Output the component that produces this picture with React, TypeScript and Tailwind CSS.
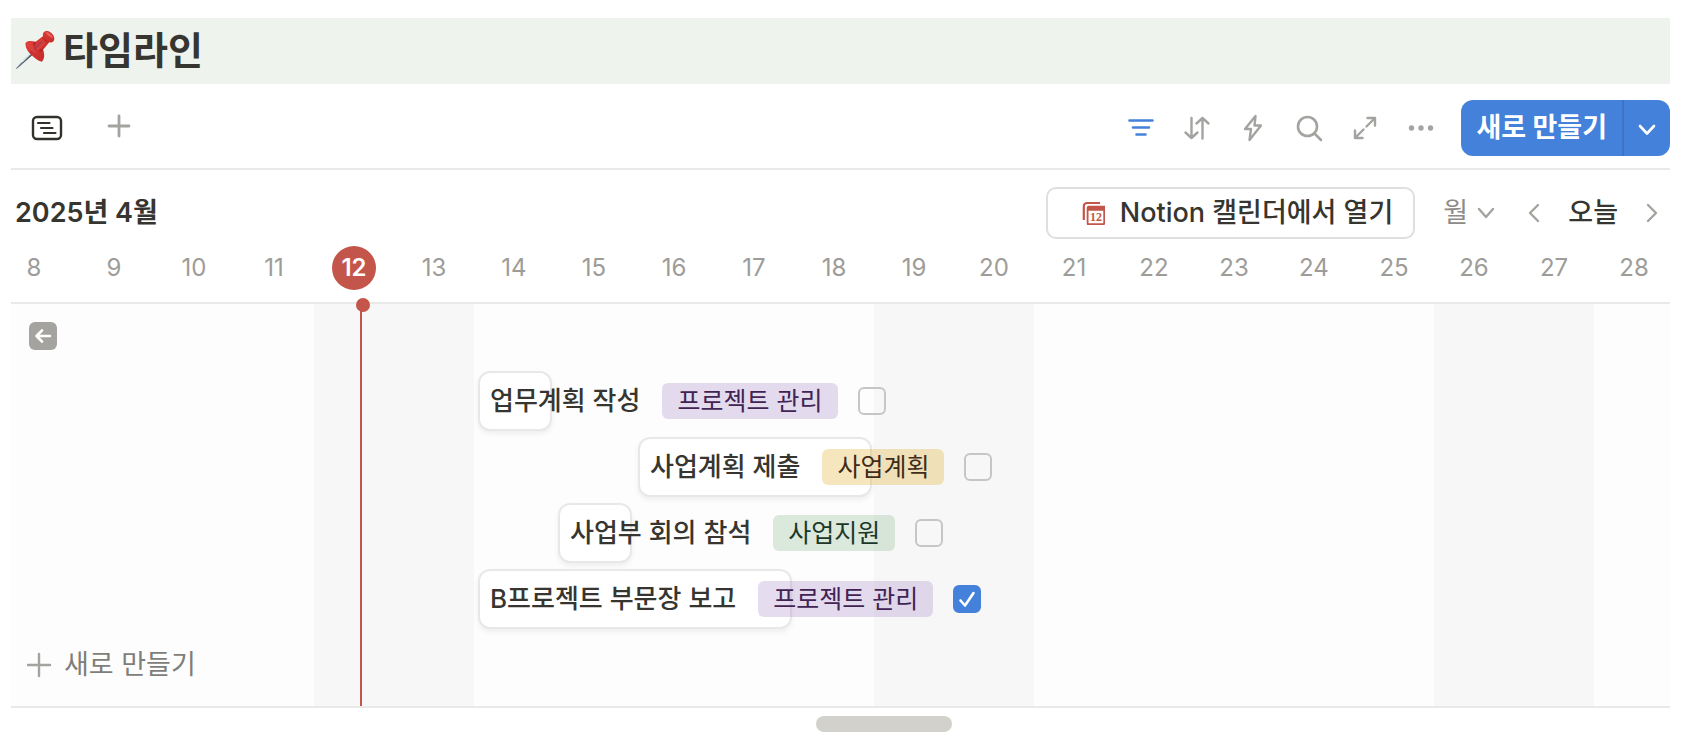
import React from "react";

const DAY_WIDTH = 80;
const FIRST_DAY = 8;
const TODAY = 12;
const DAYS = Array.from({ length: 21 }, (_, i) => FIRST_DAY + i);
const WEEKENDS = [12, 13, 19, 20, 26, 27];

type Task = {
  title: string;
  tag: string;
  tagClass: string;
  start: number;
  days: number;
  done: boolean;
};

const PURPLE = "bg-[rgba(163,125,196,0.27)] text-[#412454]";
const YELLOW = "bg-[rgba(226,174,46,0.31)] text-[#402c1b]";
const GREEN = "bg-[rgba(123,172,129,0.26)] text-[#1c3829]";

const TASKS: Task[] = [
  { title: "업무계획 작성", tag: "프로젝트 관리", tagClass: PURPLE, start: 14, days: 1, done: false },
  { title: "사업계획 제출", tag: "사업계획", tagClass: YELLOW, start: 16, days: 3, done: false },
  { title: "사업부 회의 참석", tag: "사업지원", tagClass: GREEN, start: 15, days: 1, done: false },
  { title: "B프로젝트 부문장 보고", tag: "프로젝트 관리", tagClass: PURPLE, start: 14, days: 4, done: true },
];

function PinIcon() {
  return (
    <svg width="40" height="40" viewBox="16 30 118 118" aria-hidden="true">
      <defs>
        <linearGradient id="pin-body" x1="0" y1="0" x2="1" y2="1">
          <stop offset="0" stopColor="#e8453f" />
          <stop offset="0.5" stopColor="#cf322f" />
          <stop offset="1" stopColor="#c02a2a" />
        </linearGradient>
      </defs>
      <path d="M72 84 L81 92 L22 143 L18 146 L20 141 Z" fill="#8ea3b8" />
      <path d="M76 88 L81 92 L24 142 L18 146 Z" fill="#55585f" />
      <path d="M68 86 L74 90 L38 125 L34 125 Z" fill="#dbe9f5" />
      <path
        d="M47 68 C52 61 66 61 77 65 L99 48 C96 38 103 31 113 33 C123 36 132 46 132 56 C132 65 124 69 117 66 L99 88 C104 103 103 116 95 124 C83 120 73 113 64 103 C54 94 46 81 47 68 Z"
        fill="url(#pin-body)"
      />
      <path d="M99 48 C103 58 109 63 117 66 C108 66 100 59 99 48 Z" fill="#a72228" />
      <path d="M77 65 C80 77 88 85 99 88 L93 96 C79 91 70 80 69 70 Z" fill="#b3262c" />
      <path d="M95 56 L106 70 L84 92 C78 88 73 82 73 76 Z" fill="#d93d3a" />
      <path d="M96 66 L64 99 L61 96 L92 63 Z" fill="#8b3c55" opacity="0.6" />
      <path d="M106 36 C114 35 126 45 128 55 C121 52 109 45 106 36 Z" fill="#ec5f58" />
      <path d="M50 70 C55 66 63 66 68 69 C66 78 74 92 84 100 C68 97 53 84 50 70 Z" fill="#dd403c" />
    </svg>
  );
}

function ToolButton({ label, children, blue }: { label: string; children: React.ReactNode; blue?: boolean }) {
  return (
    <button
      type="button"
      aria-label={label}
      className={`flex h-14 w-14 items-center justify-center ${blue ? "text-[#4381db]" : "text-[#a4a39f]"}`}
    >
      <svg width="30" height="30" viewBox="0 0 30 30" fill="none" stroke="currentColor" strokeWidth="2.6" strokeLinecap="round" strokeLinejoin="round">
        {children}
      </svg>
    </button>
  );
}

function Toolbar() {
  return (
    <div className="flex items-center justify-between border-b-2 border-[#e9e9e8] pt-4 pb-3">
      <div className="flex items-center gap-4">
        <button type="button" aria-label="타임라인 보기" className="flex h-14 w-[72px] items-center justify-center text-[#32312c]">
          <svg width="32" height="26" viewBox="0 0 32 26" fill="none" stroke="currentColor" strokeWidth="2.4" strokeLinecap="round">
            <rect x="2" y="2" width="28" height="22" rx="4" />
            <path d="M7 8h11.500M10 13h11.500M13 18h11.500" strokeWidth="2.200" />
          </svg>
        </button>
        <button type="button" aria-label="보기 추가" className="flex h-14 w-10 items-center justify-center pb-1 text-[#a4a39f]">
          <svg width="24" height="24" viewBox="0 0 24 24" fill="none" stroke="currentColor" strokeWidth="2.8" strokeLinecap="round">
            <path d="M12 2v20M2 12h20" />
          </svg>
        </button>
      </div>
      <div className="flex items-center">
        <ToolButton label="필터" blue>
          <path d="M3.500 7.500h23M7 14.500h16M10.500 21.500h9" />
        </ToolButton>
        <ToolButton label="정렬">
          <path d="M9.500 5v20M3.500 19.500l6 5.500 6-5.500M20.500 25.500V5M14.500 10.500l6-5.500 6 5.500" strokeWidth="2.400" />
        </ToolButton>
        <ToolButton label="자동화">
          <path d="M17.500 3L7 16h6L11.500 27L23 12.500h-6.500z" strokeWidth="2.400" />
        </ToolButton>
        <ToolButton label="검색">
          <circle cx="13.500" cy="13.500" r="9.500" />
          <path d="M20.500 20.500l6.500 6.500" />
        </ToolButton>
        <ToolButton label="확대">
          <path d="M17.500 5H25v7.500M25 5l-8.500 8.500M5 17.500V25h7.500M5 25l8.500-8.500" strokeWidth="2.400" />
        </ToolButton>
        <ToolButton label="더 보기">
          <g fill="currentColor" stroke="none">
            <circle cx="5.500" cy="15" r="2.700" />
            <circle cx="15" cy="15" r="2.700" />
            <circle cx="24.500" cy="15" r="2.700" />
          </g>
        </ToolButton>
        <div className="ml-3 flex h-14 overflow-hidden rounded-xl bg-[#4381db] text-white">
          <button type="button" className="flex items-center px-[15px] text-[27px] leading-8 font-bold">
            새로 만들기
          </button>
          <button type="button" aria-label="템플릿 선택" className="flex w-12 items-center justify-center border-l-2 border-[#3d75c4]">
            <svg width="20" height="20" viewBox="0 0 20 20" fill="none" stroke="currentColor" strokeWidth="2.600" strokeLinecap="round" strokeLinejoin="round">
              <path d="M3 8l7 7.500L17 8" />
            </svg>
          </button>
        </div>
      </div>
    </div>
  );
}

function CalendarIcon() {
  return (
    <svg width="24" height="24" viewBox="0 0 24 24" aria-hidden="true">
      <path d="M1.800 19V5.500C1.800 3 3 2 5.500 2H18" fill="none" stroke="#c4554a" strokeWidth="2.200" />
      <path
        fillRule="evenodd"
        d="M7.500 4.800H23V22.500C23 23.500 22.500 24 21.500 24H6C5 24 4.700 23.500 4.700 22.500V7C4.700 5.400 5.700 4.800 7.500 4.800ZM6.500 9.800V22.200H21.300V9.800Z"
        fill="#c4554a"
      />
      <text x="14" y="20.300" textAnchor="middle" fontSize="12" fontWeight="700" fill="#c4554a" fontFamily="'Liberation Serif', serif">
        12
      </text>
    </svg>
  );
}

function Chevron({ d, size }: { d: string; size: "narrow" | "wide" }) {
  const narrow = size === "narrow";
  return (
    <svg
      width={narrow ? 14 : 20}
      height={narrow ? 22 : 14}
      viewBox={narrow ? "0 0 14 22" : "0 0 20 14"}
      className="pointer-events-none shrink-0 text-[#a4a39f]"
      fill="none"
      stroke="currentColor"
      strokeWidth="2.400"
      strokeLinecap="round"
      strokeLinejoin="round"
      aria-hidden="true"
    >
      <path d={d} />
    </svg>
  );
}

function PeriodBar() {
  return (
    <div className="flex items-center justify-between pt-[17px] pl-1 text-[27px] leading-8 text-[#37352f]">
      <h2 className="font-semibold">2025년 4월</h2>
      <div className="flex items-center">
        <button type="button" className="flex h-[52px] items-center gap-[14px] rounded-[10px] border-2 border-[#dfdfde] pr-5 pl-[34px] font-medium">
          <CalendarIcon />
          Notion 캘린더에서 열기
        </button>
        <label className="ml-7 flex items-center">
          <select aria-label="기간 단위" className="-mr-5 appearance-none bg-transparent pr-7 text-[#8d8c88]" defaultValue="월">
            <option>월</option>
          </select>
          <Chevron size="wide" d="M3 3l7 8 7-8" />
        </label>
        <button type="button" aria-label="이전" className="ml-5 flex w-9 justify-center">
          <Chevron size="narrow" d="M11 3L3 11l8 8" />
        </button>
        <button type="button" className="px-4 font-medium">
          오늘
        </button>
        <button type="button" aria-label="다음" className="flex w-9 justify-center">
          <Chevron size="narrow" d="M3 3l8 8-8 8" />
        </button>
      </div>
    </div>
  );
}

function DateHeader() {
  return (
    <div className="-ml-[17px] flex pt-[7px] pb-3 text-2xl text-[#9d9c98]">
      {DAYS.map((day) => (
        <div key={day} className="flex h-11 w-20 shrink-0 items-center justify-center">
          {day === TODAY ? (
            <span className="flex h-11 w-11 items-center justify-center rounded-full bg-[#c4554a] font-semibold text-white">{day}</span>
          ) : (
            day
          )}
        </div>
      ))}
    </div>
  );
}

function TaskRow({ task }: { task: Task }) {
  return (
    <div className="flex h-[66px] items-start pt-[3px]">
      <div
        className="flex h-[60px] items-center gap-5 rounded-xl border-2 border-[#e8e8e7] bg-white pl-[10px] whitespace-nowrap shadow-[0_3px_5px_rgba(0,0,0,0.06)]"
        style={{ marginLeft: (task.start - FIRST_DAY) * DAY_WIDTH + 4, width: task.days * DAY_WIDTH - 6 }}
      >
        <span className="pr-[2px] text-[26px] leading-8 font-medium text-[#37352f]">{task.title}</span>
        <span className={`flex h-9 shrink-0 items-center rounded-md px-[15px] text-[25px] leading-8 ${task.tagClass}`}>{task.tag}</span>
        <label className="grid shrink-0">
          <input
            type="checkbox"
            aria-label={task.title}
            defaultChecked={task.done}
            className="peer col-start-1 row-start-1 h-7 w-7 appearance-none rounded-md border-2 border-[#c7c6c4] checked:border-[#4381db] checked:bg-[#4381db]"
          />
          <svg
            className="pointer-events-none invisible col-start-1 row-start-1 h-7 w-7 text-white peer-checked:visible"
            viewBox="0 0 28 28"
            fill="none"
            stroke="currentColor"
            strokeWidth="2.600"
            strokeLinecap="round"
            strokeLinejoin="round"
          >
            <path d="M7.500 15.500l4.500 5L20.500 8" />
          </svg>
        </label>
      </div>
    </div>
  );
}

function Timeline() {
  return (
    <div className="border-y-2 border-[#e9e9e8] bg-[#fdfdfd]">
      <div className="relative -ml-[17px]">
        <div className="absolute inset-0 flex" aria-hidden="true">
          {DAYS.map((day) => (
            <div key={day} className={`w-20 shrink-0 ${WEEKENDS.includes(day) ? "bg-[#f7f7f7]" : ""}`} />
          ))}
        </div>
        <div className="absolute inset-y-0 left-[366px] w-[2px] bg-[#c4554a]" />
        <div className="absolute -top-[6px] left-[362px] h-[14px] w-[14px] rounded-full bg-[#c4554a]" />
        <div className="relative pb-2">
          <div className="flex h-16 items-center pl-[35px]">
            <button type="button" aria-label="이전 항목으로 이동" className="flex h-7 w-7 items-center justify-center rounded-md bg-[#a4a39f] text-white">
              <svg width="20" height="20" viewBox="0 0 20 20" fill="none" stroke="currentColor" strokeWidth="2.600" strokeLinecap="round" strokeLinejoin="round">
                <path d="M17 10H3.500M9 4.500L3.500 10 9 15.500" />
              </svg>
            </button>
          </div>
          {TASKS.map((task) => (
            <TaskRow key={task.title} task={task} />
          ))}
          <div className="flex h-[66px] items-center pl-8">
            <button type="button" className="flex items-center gap-3 text-[27px] leading-8 text-[#7f7e7a]">
              <svg width="26" height="26" viewBox="0 0 26 26" fill="none" stroke="#a4a39f" strokeWidth="2.400" strokeLinecap="round">
                <path d="M13 2v22M2 13h22" />
              </svg>
              새로 만들기
            </button>
          </div>
        </div>
      </div>
    </div>
  );
}

export default function App() {
  return (
    <main className="bg-white pt-[18px] pr-[18px] pb-1 pl-[11px] font-['Inter','Noto_Sans_CJK_KR',sans-serif]">
      <header className="flex h-[66px] items-center gap-2 bg-[#eef3ed] pb-[2px] pl-1">
        <PinIcon />
        <h1 className="text-[38px] leading-[44px] font-bold text-[#37352f]">타임라인</h1>
      </header>
      <Toolbar />
      <PeriodBar />
      <div className="overflow-hidden">
        <DateHeader />
        <Timeline />
      </div>
      <div className="pt-2">
        <div className="ml-[48.5%] h-4 w-[136px] rounded-lg bg-[#d3d1cb]" />
      </div>
    </main>
  );
}
